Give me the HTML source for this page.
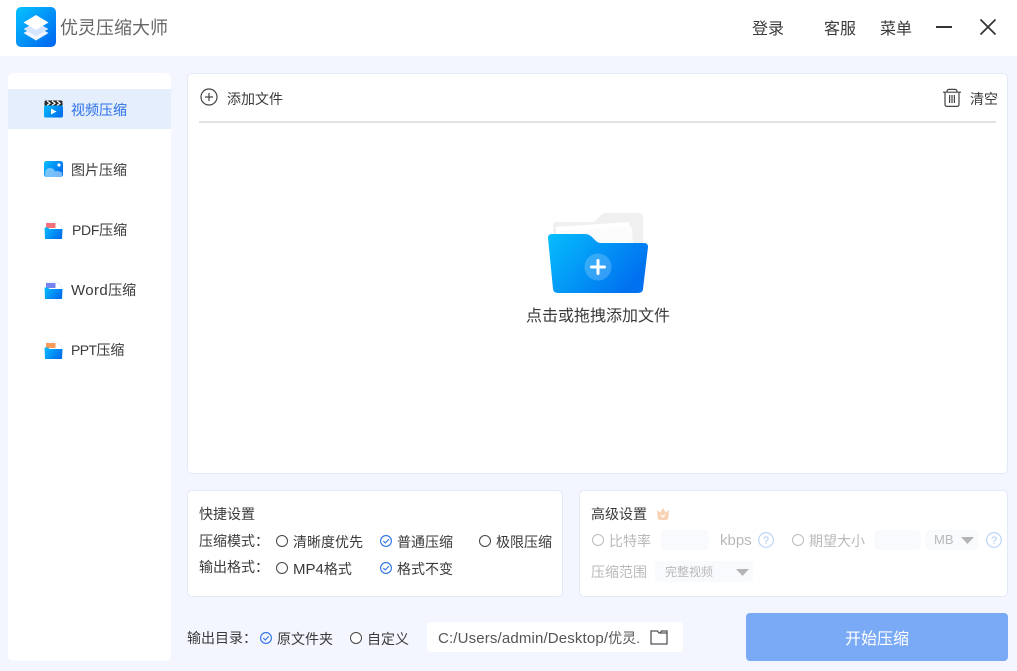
<!DOCTYPE html>
<html lang="zh">
<head>
<meta charset="utf-8">
<title>优灵压缩大师</title>
<style>
html,body{margin:0;padding:0;width:1017px;height:671px;overflow:hidden;background:#f3f6fe;}
body{position:relative;font-family:"Liberation Sans","Noto Sans CJK SC",sans-serif;color:#3a3a3a;}
.a{position:absolute;}
.t{position:absolute;white-space:nowrap;line-height:20px;font-size:14px;color:#3a3a3a;}
.card{position:absolute;background:#fff;border:1px solid #e2e9f9;border-radius:5px;box-sizing:border-box;}
.r{position:absolute;width:12px;height:12px;border:1.3px solid #444;border-radius:50%;box-sizing:border-box;background:#fff;}
.r.g{border-color:#bbb;}
svg{position:absolute;overflow:visible;}
.box{position:absolute;background:#f9fafe;border-radius:4px;}
.g{color:#b9b9b9;}
</style>
</head>
<body>
<!-- header -->
<div class="a" style="left:0;top:0;width:1017px;height:56px;background:#fff;"></div>
<svg style="left:16px;top:7px" width="40" height="40" viewBox="0 0 40 40">
<defs>
<linearGradient id="lg" x1="0" y1="0" x2="1" y2="1"><stop offset="0" stop-color="#05c3ff"/><stop offset="1" stop-color="#0063f0"/></linearGradient>
<linearGradient id="fg" x1="0" y1="0" x2="1" y2="0.5"><stop offset="0" stop-color="#06bdfd"/><stop offset="1" stop-color="#0072f0"/></linearGradient>
</defs>
<rect width="40" height="40" rx="5" fill="url(#lg)"/>
<path d="M20 19 L32.5 26 L20 33.5 L7.5 26 Z" fill="#f0f5ff"/>
<path d="M20 15 L32.5 22 L20 29 L7.5 22 Z" fill="#d5e5ff"/>
<path d="M20 8 L32.5 15.5 L20 23 L7.5 15.5 Z" fill="#fff"/>
</svg>
<div class="t" style="left:60px;top:15px;font-size:18px;line-height:26px;color:#666;">优灵压缩大师</div>
<div class="t" style="left:752px;top:19px;font-size:16px;line-height:22px;">登录</div>
<div class="t" style="left:824px;top:19px;font-size:16px;line-height:22px;">客服</div>
<div class="t" style="left:880px;top:19px;font-size:16px;line-height:22px;">菜单</div>
<div class="a" style="left:936px;top:26px;width:16px;height:2px;background:#333;"></div>
<svg style="left:980px;top:19px" width="16" height="16" viewBox="0 0 16 16"><path d="M0.5 0.5 L15.5 15.5 M15.5 0.5 L0.5 15.5" stroke="#333" stroke-width="1.7" fill="none"/></svg>

<!-- sidebar -->
<div class="a" style="left:8px;top:73px;width:163px;height:588px;background:#fff;border-radius:6px;"></div>
<div class="a" style="left:8px;top:89px;width:163px;height:40px;background:#e4eefd;"></div>

<svg style="left:44px;top:100px" width="19" height="18" viewBox="0 0 19 18">
<rect x="0.5" y="0.5" width="18" height="6" fill="#2a2a2a" rx="1.5"/>
<path d="M3 1 L6 3.2 L3 5.5 M8 1 L11 3.2 L8 5.5 M13 1 L16 3.2 L13 5.5" stroke="#fff" stroke-width="1.2" fill="none"/>
<rect x="0" y="5.5" width="19" height="12" rx="1.8" fill="url(#fg)"/>
<path d="M7 8.5 L12.5 11.5 L7 14.5 Z" fill="#fff"/>
</svg>
<div class="t" style="left:71px;top:100px;color:#2a6fe6;">视频压缩</div>

<svg style="left:44px;top:161px" width="19" height="17" viewBox="0 0 19 17">
<rect width="19" height="16" rx="2.5" fill="url(#fg)"/>
<circle cx="15" cy="4" r="1.6" fill="#fff"/>
<path d="M1 13.5 Q1 7 6 7 Q10 7 11 10.5 Q14 9 18 11.5 L18 14 Q18 16 16 16 L3 16 Q1 16 1 13.5Z" fill="#a9d6fb" opacity=".7"/>
</svg>
<div class="t" style="left:71px;top:160px;">图片压缩</div>

<svg style="left:44px;top:221px" width="19" height="19" viewBox="0 0 19 19">
<path d="M2.5 1 L13.5 1 L17.5 5 L17.5 10 L2.5 10 Z" fill="#fff" stroke="#dcecfb" stroke-width=".7"/>
<rect x="2" y="2" width="9.5" height="5" fill="#f2707a"/>
<path d="M0.5 6.5 L4 6.5 L5.5 8 L18.5 8 L18 18 L1 18 Z" fill="url(#fg)"/>
</svg>
<div class="t" style="left:72px;top:220px;"><span style="letter-spacing:-.3px">PDF</span>压缩</div>

<svg style="left:44px;top:281px" width="19" height="19" viewBox="0 0 19 19">
<path d="M2.5 1 L13.5 1 L17.5 5 L17.5 10 L2.5 10 Z" fill="#fff" stroke="#dcecfb" stroke-width=".7"/>
<rect x="2" y="2" width="9.5" height="5" fill="#7682ee"/>
<path d="M0.5 6.5 L4 6.5 L5.5 8 L18.5 8 L18 18 L1 18 Z" fill="url(#fg)"/>
</svg>
<div class="t" style="left:71px;top:280px;"><span style="font-size:15px;letter-spacing:.4px">Word</span>压缩</div>

<svg style="left:44px;top:341px" width="19" height="19" viewBox="0 0 19 19">
<path d="M2.5 1 L13.5 1 L17.5 5 L17.5 10 L2.5 10 Z" fill="#fff" stroke="#dcecfb" stroke-width=".7"/>
<rect x="2" y="2" width="9.5" height="5" fill="#f99a5a"/>
<path d="M0.5 6.5 L4 6.5 L5.5 8 L18.5 8 L18 18 L1 18 Z" fill="url(#fg)"/>
</svg>
<div class="t" style="left:71px;top:340px;"><span style="letter-spacing:-.6px">PPT</span>压缩</div>

<!-- main panel -->
<div class="card" style="left:187px;top:73px;width:821px;height:401px;"></div>
<svg style="left:200px;top:88px" width="18" height="18" viewBox="0 0 18 18"><circle cx="9" cy="9" r="8" fill="none" stroke="#444" stroke-width="1.2"/><path d="M5 9 H13 M9 5 V13" stroke="#444" stroke-width="1.2"/></svg>
<div class="t" style="left:227px;top:89px;">添加文件</div>
<svg style="left:943px;top:88px" width="18" height="20" viewBox="0 0 18 20"><path d="M0 4.2 H18 M4 3.8 Q4 1.4 6 1.4 H12 Q14 1.4 14 3.8 M2 4.5 V16.5 Q2 18.4 4 18.4 H14 Q16 18.4 16 16.5 V4.5 M6.6 7 V15 M9 7 V15 M11.4 7 V15" fill="none" stroke="#444" stroke-width="1.2"/></svg>
<div class="t" style="left:970px;top:89px;">清空</div>
<div class="a" style="left:199px;top:121px;width:797px;height:2px;background:#e1e1e1;"></div>

<svg style="left:548px;top:213px" width="100" height="80" viewBox="0 0 100 80">
<path d="M5 47 L5 12 Q5 9 8 9 L46 9 L52 3 Q55 0 58 0 L90 0 Q95 0 95 5 L95 47 Z" fill="#f0f0f0"/>
<path d="M8 14 L81 9 L89 50 L10 50 Z" fill="#fff"/>
<path d="M8 18 L84 14 L86 50 L8 50 Z" fill="#fcfcfc"/>
<path d="M0 25 Q0 21 4 21 L37 21 Q41 21 44 24 L48 28 Q50 30 53 30 L96 30 Q100 30 100 34 L95 76 Q94.5 80 90 80 L10 80 Q5.5 80 5 76 Z" fill="url(#fg)"/>
<circle cx="50" cy="54" r="13.5" fill="#fff" opacity=".2"/>
<path d="M50 47.5 V60.5 M43.5 54 H56.5" stroke="#fff" stroke-width="3" stroke-linecap="round"/>
</svg>
<div class="t" style="left:526px;top:307px;font-size:16px;line-height:20px;">点击或拖拽添加文件</div>

<!-- quick settings -->
<div class="card" style="left:187px;top:490px;width:376px;height:107px;"></div>
<div class="t" style="left:199px;top:504px;">快捷设置</div>
<div class="t" style="left:199px;top:531px;">压缩模式：</div>
<div class="r" style="left:276px;top:535px;"></div>
<div class="t" style="left:293px;top:532px;">清晰度优先</div>
<svg style="left:380px;top:535px" width="12" height="12" viewBox="0 0 12 12"><circle cx="6" cy="6" r="5.4" fill="none" stroke="#2b72e6" stroke-width="1.1"/><path d="M3.3 6 L5.3 8 L8.8 4.2" fill="none" stroke="#2b72e6" stroke-width="1.1"/></svg>
<div class="t" style="left:397px;top:532px;">普通压缩</div>
<div class="r" style="left:479px;top:535px;"></div>
<div class="t" style="left:496px;top:532px;">极限压缩</div>
<div class="t" style="left:199px;top:557px;">输出格式：</div>
<div class="r" style="left:276px;top:562px;"></div>
<div class="t" style="left:293px;top:559px;"><span style="font-size:15px">MP4</span>格式</div>
<svg style="left:380px;top:562px" width="12" height="12" viewBox="0 0 12 12"><circle cx="6" cy="6" r="5.4" fill="none" stroke="#2b72e6" stroke-width="1.1"/><path d="M3.3 6 L5.3 8 L8.8 4.2" fill="none" stroke="#2b72e6" stroke-width="1.1"/></svg>
<div class="t" style="left:397px;top:559px;">格式不变</div>

<!-- advanced settings -->
<div class="card" style="left:579px;top:490px;width:429px;height:107px;"></div>
<div class="t" style="left:591px;top:504px;">高级设置</div>
<svg style="left:656px;top:507px" width="14" height="14" viewBox="0 0 14 14"><path d="M1 3 L4.3 5.5 L7 1 L9.7 5.5 L13 3 L12.3 11 Q12 13 10 13 L4 13 Q2 13 1.7 11 Z" fill="#f8d2b3"/><path d="M5 7.5 L7 10 L9 7.5" stroke="#fff" stroke-width="1.2" fill="none"/></svg>
<div class="r g" style="left:592px;top:534px;"></div>
<div class="t g" style="left:609px;top:531px;">比特率</div>
<div class="box" style="left:661px;top:530px;width:48px;height:20px;"></div>
<div class="t g" style="left:720px;top:531px;font-size:15px;">kbps</div>
<svg style="left:758px;top:532px" width="16" height="16" viewBox="0 0 16 16"><circle cx="8" cy="8" r="7.3" fill="none" stroke="#b5d0f8" stroke-width="1.1"/><text x="8" y="12" font-size="11" text-anchor="middle" fill="#a9c8f6" font-family="Liberation Sans">?</text></svg>
<div class="r g" style="left:792px;top:534px;"></div>
<div class="t g" style="left:809px;top:531px;">期望大小</div>
<div class="box" style="left:874px;top:530px;width:47px;height:20px;"></div>
<div class="box" style="left:925px;top:530px;width:53px;height:20px;"></div>
<div class="t g" style="left:934px;top:530px;font-size:13px;">MB</div>
<svg style="left:961px;top:537px" width="13" height="7" viewBox="0 0 13 7"><path d="M0 0 H13 L6.5 7 Z" fill="#b4b4b4"/></svg>
<svg style="left:986px;top:532px" width="16" height="16" viewBox="0 0 16 16"><circle cx="8" cy="8" r="7.3" fill="none" stroke="#b5d0f8" stroke-width="1.1"/><text x="8" y="12" font-size="11" text-anchor="middle" fill="#a9c8f6" font-family="Liberation Sans">?</text></svg>
<div class="t g" style="left:591px;top:562px;">压缩范围</div>
<div class="box" style="left:655px;top:561px;width:98px;height:21px;"></div>
<div class="t g" style="left:665px;top:562px;font-size:12px;">完整视频</div>
<svg style="left:736px;top:569px" width="13" height="7" viewBox="0 0 13 7"><path d="M0 0 H13 L6.5 7 Z" fill="#b4b4b4"/></svg>

<!-- bottom -->
<div class="t" style="left:187px;top:628px;">输出目录：</div>
<svg style="left:260px;top:632px" width="12" height="12" viewBox="0 0 12 12"><circle cx="6" cy="6" r="5.4" fill="none" stroke="#2b72e6" stroke-width="1.1"/><path d="M3.3 6 L5.3 8 L8.8 4.2" fill="none" stroke="#2b72e6" stroke-width="1.1"/></svg>
<div class="t" style="left:277px;top:629px;">原文件夹</div>
<div class="r" style="left:350px;top:632px;"></div>
<div class="t" style="left:367px;top:629px;">自定义</div>
<div class="a" style="left:427px;top:622px;width:256px;height:30px;background:#fff;border-radius:4px;"></div>
<div class="t" style="left:438px;top:628px;color:#555;"><span style="font-size:15px;letter-spacing:.15px">C:/Users/admin/Desktop/</span>优灵.</div>
<svg style="left:650px;top:630px" width="18" height="15" viewBox="0 0 18 15"><path d="M1 14 V1 H7.5 L9 3 H17 V14 Z M10 3 L11.5 1 H17 V3" fill="none" stroke="#555" stroke-width="1.3"/></svg>
<div class="a" style="left:746px;top:613px;width:262px;height:48px;background:#7aaaf5;border-radius:4px;"></div>
<div class="t" style="left:845px;top:630px;font-size:16px;color:#fff;">开始压缩</div>
</body>
</html>
